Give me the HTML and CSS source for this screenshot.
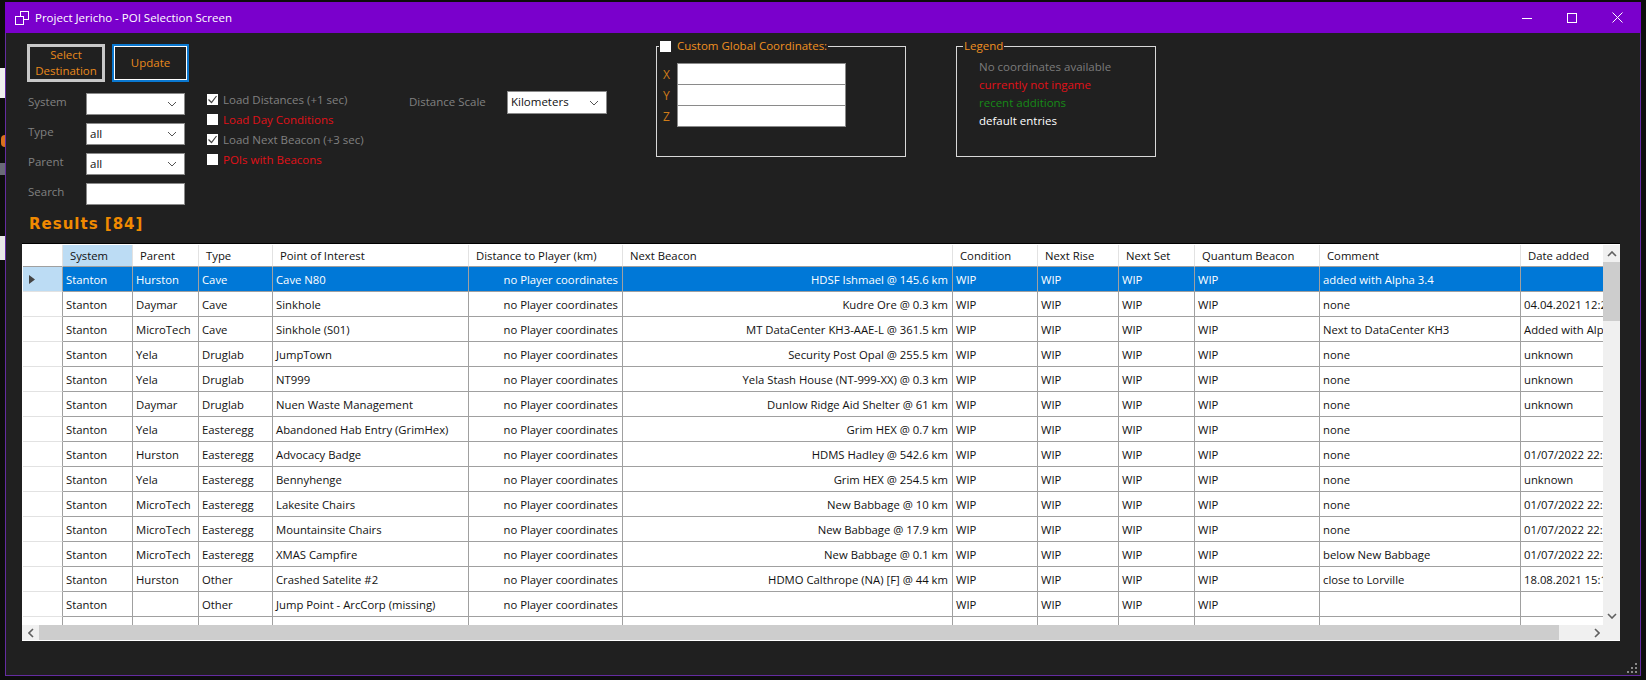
FILE: index.html
```html
<!DOCTYPE html>
<html lang="en">
<head>
  <meta charset="UTF-8" />
  <title>Project Jericho - POI Selection Screen</title>
  <link rel="stylesheet" href="styles.css">
</head>
<body>
<!-- bits of the desktop behind the window -->
<div class="behind behind-white"></div>
<div class="behind behind-orange"></div>
<div class="behind behind-grey"></div>
<div class="behind behind-white2"></div>

<div class="window">
  <header class="titlebar">
    <svg class="app-icon" width="14" height="14" viewBox="0 0 14 14" fill="none" stroke="#fff" stroke-width="1">
      <rect x="5.5" y="0.5" width="8" height="8"/>
      <rect x="0.5" y="5.5" width="8" height="8" fill="#7a00cc"/>
      <path d="M8.5 8.5V5.5H5.5"/>
    </svg>
    <span class="title">Project Jericho - POI Selection Screen</span>
    <div class="caption-buttons">
      <svg width="10" height="10" viewBox="0 0 10 10" stroke="#fff" fill="none"><path d="M0 5.5H10"/></svg>
      <svg width="10" height="10" viewBox="0 0 10 10" stroke="#fff" fill="none"><rect x="0.5" y="0.5" width="9" height="9"/></svg>
      <svg width="11" height="11" viewBox="0 0 11 11" stroke="#fff" fill="none"><path d="M0.5 0.5L10.5 10.5M10.5 0.5L0.5 10.5"/></svg>
    </div>
  </header>

  <section class="controls">
    <div class="col-main">
      <div class="buttons">
        <button class="btn btn-select">Select<br>Destination</button>
        <button class="btn btn-update">Update</button>
      </div>
      <div class="filters">
        <label>System</label>
        <div class="combo"><span></span><svg class="chev" width="10" height="6" viewBox="0 0 10 6"><path d="M1 1l4 4 4-4"/></svg></div>
        <label>Type</label>
        <div class="combo"><span>all</span><svg class="chev" width="10" height="6" viewBox="0 0 10 6"><path d="M1 1l4 4 4-4"/></svg></div>
        <label>Parent</label>
        <div class="combo"><span>all</span><svg class="chev" width="10" height="6" viewBox="0 0 10 6"><path d="M1 1l4 4 4-4"/></svg></div>
        <label>Search</label>
        <div class="combo"></div>
      </div>
    </div>

    <div class="col-options">
      <div class="opt"><span class="box"><svg width="11" height="11" viewBox="0 0 11 11"><path d="M1.5 5.5l3 3 5-6.5"/></svg></span>Load Distances (+1 sec)</div>
      <div class="opt red"><span class="box"></span>Load Day Conditions</div>
      <div class="opt"><span class="box"><svg width="11" height="11" viewBox="0 0 11 11"><path d="M1.5 5.5l3 3 5-6.5"/></svg></span>Load Next Beacon (+3 sec)</div>
      <div class="opt red"><span class="box"></span>POIs with Beacons</div>
    </div>

    <div class="col-scale">
      <label>Distance Scale</label>
      <div class="combo"><span>Kilometers</span><svg class="chev" width="10" height="6" viewBox="0 0 10 6"><path d="M1 1l4 4 4-4"/></svg></div>
    </div>

    <fieldset class="group group-coords">
      <legend><span class="box"></span>Custom Global Coordinates:</legend>
      <div class="coords">
        <span>X</span><div class="coord-input"></div>
        <span>Y</span><div class="coord-input"></div>
        <span>Z</span><div class="coord-input"></div>
      </div>
    </fieldset>

    <fieldset class="group group-legend">
      <legend>Legend</legend>
      <ul class="legend-list">
        <li class="grey">No coordinates available</li>
        <li class="red">currently not ingame</li>
        <li class="green">recent additions</li>
        <li class="white">default entries</li>
      </ul>
    </fieldset>
  </section>

  <h2 class="results">Results [84]</h2>

  <section class="grid">
    <div class="grid-main">
      <div class="grid-view">
        <table>
          <colgroup>
            <col style="width:40px"><col style="width:70px"><col style="width:66px"><col style="width:74px"><col style="width:196px"><col style="width:154px"><col style="width:330px"><col style="width:85px"><col style="width:81px"><col style="width:76px"><col style="width:125px"><col style="width:201px"><col style="width:140px">
          </colgroup>
          <thead>
            <tr><th class="rowhead"></th><th class="sorted">System</th><th>Parent</th><th>Type</th><th>Point of Interest</th><th>Distance to Player (km)</th><th>Next Beacon</th><th>Condition</th><th>Next Rise</th><th>Next Set</th><th>Quantum Beacon</th><th>Comment</th><th>Date added</th></tr>
          </thead>
          <tbody>
            <tr class="selected"><td class="rowhead"><svg width="6" height="9" viewBox="0 0 6 9"><path d="M0 0l6 4.5L0 9z" fill="#444"/></svg></td><td>Stanton</td><td>Hurston</td><td>Cave</td><td>Cave N80</td><td class="num">no Player coordinates</td><td class="num">HDSF Ishmael @ 145.6 km</td><td>WIP</td><td>WIP</td><td>WIP</td><td>WIP</td><td>added with Alpha 3.4</td><td></td></tr>
            <tr><td class="rowhead"></td><td>Stanton</td><td>Daymar</td><td>Cave</td><td>Sinkhole</td><td class="num">no Player coordinates</td><td class="num">Kudre Ore @ 0.3 km</td><td>WIP</td><td>WIP</td><td>WIP</td><td>WIP</td><td>none</td><td>04.04.2021 12:24</td></tr>
            <tr><td class="rowhead"></td><td>Stanton</td><td>MicroTech</td><td>Cave</td><td>Sinkhole (S01)</td><td class="num">no Player coordinates</td><td class="num">MT DataCenter KH3-AAE-L @ 361.5 km</td><td>WIP</td><td>WIP</td><td>WIP</td><td>WIP</td><td>Next to DataCenter KH3</td><td>Added with Alpha 3.4</td></tr>
            <tr><td class="rowhead"></td><td>Stanton</td><td>Yela</td><td>Druglab</td><td>JumpTown</td><td class="num">no Player coordinates</td><td class="num">Security Post Opal @ 255.5 km</td><td>WIP</td><td>WIP</td><td>WIP</td><td>WIP</td><td>none</td><td>unknown</td></tr>
            <tr><td class="rowhead"></td><td>Stanton</td><td>Yela</td><td>Druglab</td><td>NT999</td><td class="num">no Player coordinates</td><td class="num">Yela Stash House (NT-999-XX) @ 0.3 km</td><td>WIP</td><td>WIP</td><td>WIP</td><td>WIP</td><td>none</td><td>unknown</td></tr>
            <tr><td class="rowhead"></td><td>Stanton</td><td>Daymar</td><td>Druglab</td><td>Nuen Waste Management</td><td class="num">no Player coordinates</td><td class="num">Dunlow Ridge Aid Shelter @ 61 km</td><td>WIP</td><td>WIP</td><td>WIP</td><td>WIP</td><td>none</td><td>unknown</td></tr>
            <tr><td class="rowhead"></td><td>Stanton</td><td>Yela</td><td>Easteregg</td><td>Abandoned Hab Entry (GrimHex)</td><td class="num">no Player coordinates</td><td class="num">Grim HEX @ 0.7 km</td><td>WIP</td><td>WIP</td><td>WIP</td><td>WIP</td><td>none</td><td></td></tr>
            <tr><td class="rowhead"></td><td>Stanton</td><td>Hurston</td><td>Easteregg</td><td>Advocacy Badge</td><td class="num">no Player coordinates</td><td class="num">HDMS Hadley @ 542.6 km</td><td>WIP</td><td>WIP</td><td>WIP</td><td>WIP</td><td>none</td><td>01/07/2022 22:15</td></tr>
            <tr><td class="rowhead"></td><td>Stanton</td><td>Yela</td><td>Easteregg</td><td>Bennyhenge</td><td class="num">no Player coordinates</td><td class="num">Grim HEX @ 254.5 km</td><td>WIP</td><td>WIP</td><td>WIP</td><td>WIP</td><td>none</td><td>unknown</td></tr>
            <tr><td class="rowhead"></td><td>Stanton</td><td>MicroTech</td><td>Easteregg</td><td>Lakesite Chairs</td><td class="num">no Player coordinates</td><td class="num">New Babbage @ 10 km</td><td>WIP</td><td>WIP</td><td>WIP</td><td>WIP</td><td>none</td><td>01/07/2022 22:15</td></tr>
            <tr><td class="rowhead"></td><td>Stanton</td><td>MicroTech</td><td>Easteregg</td><td>Mountainsite Chairs</td><td class="num">no Player coordinates</td><td class="num">New Babbage @ 17.9 km</td><td>WIP</td><td>WIP</td><td>WIP</td><td>WIP</td><td>none</td><td>01/07/2022 22:15</td></tr>
            <tr><td class="rowhead"></td><td>Stanton</td><td>MicroTech</td><td>Easteregg</td><td>XMAS Campfire</td><td class="num">no Player coordinates</td><td class="num">New Babbage @ 0.1 km</td><td>WIP</td><td>WIP</td><td>WIP</td><td>WIP</td><td>below New Babbage</td><td>01/07/2022 22:15</td></tr>
            <tr><td class="rowhead"></td><td>Stanton</td><td>Hurston</td><td>Other</td><td>Crashed Satelite #2</td><td class="num">no Player coordinates</td><td class="num">HDMO Calthrope (NA) [F] @ 44 km</td><td>WIP</td><td>WIP</td><td>WIP</td><td>WIP</td><td>close to Lorville</td><td>18.08.2021 15:17</td></tr>
            <tr><td class="rowhead"></td><td>Stanton</td><td></td><td>Other</td><td>Jump Point - ArcCorp (missing)</td><td class="num">no Player coordinates</td><td class="num"></td><td>WIP</td><td>WIP</td><td>WIP</td><td>WIP</td><td></td><td></td></tr>
            <tr><td class="rowhead"></td><td></td><td></td><td></td><td></td><td></td><td></td><td></td><td></td><td></td><td></td><td></td><td></td></tr>
          </tbody>
        </table>
      </div>
      <div class="vscroll">
        <svg width="10" height="6" viewBox="0 0 10 6"><path d="M1 5l4-4 4 4"/></svg>
        <div class="vthumb"></div>
        <svg class="down" width="10" height="6" viewBox="0 0 10 6"><path d="M1 1l4 4 4-4"/></svg>
      </div>
    </div>
    <div class="hscroll">
      <svg width="6" height="10" viewBox="0 0 6 10"><path d="M5 1L1 5l4 4"/></svg>
      <div class="hthumb"></div>
      <svg width="6" height="10" viewBox="0 0 6 10"><path d="M1 1l4 4-4 4"/></svg>
    </div>
  </section>

  <svg class="grip" width="10" height="10" viewBox="0 0 10 10" fill="#8a8a8a"><rect x="8" y="0" width="2" height="2"/><rect x="4" y="4" width="2" height="2"/><rect x="8" y="4" width="2" height="2"/><rect x="0" y="8" width="2" height="2"/><rect x="4" y="8" width="2" height="2"/><rect x="8" y="8" width="2" height="2"/></svg>
</div>
</body>
</html>
```

FILE: styles.css
```css
html, body { margin: 0; height: 100%; overflow: hidden; }
body { background: #0d0d0d; font-family: "Open Sans", "Noto Sans", sans-serif; font-size: 11.5px; padding: 2px 5px 4px; box-sizing: border-box; }

.behind { position: absolute; left: 0; width: 5px; }
.behind-white { top: 68px; height: 30px; background: #f0f0f0; }
.behind-orange { top: 135px; height: 12px; width: 4px; left: 1px; background: #d9701e; border-radius: 6px 0 0 6px; }
.behind-grey { top: 163px; height: 12px; background: #6a6a78; }
.behind-white2 { top: 236px; height: 24px; background: #e8e8e8; }

.window { position: relative; height: 100%; background: #202020; border: 1px solid #642ca0; border-top: 0; box-sizing: border-box; }

.titlebar { display: flex; align-items: center; height: 31px; background: #7a00cc; color: #fff; padding-left: 10px; margin: 0 -1px; }
.app-icon { margin-right: 6px; }
.title { font-size: 11.5px; }
.caption-buttons { margin-left: auto; display: flex; align-items: center; gap: 35px; padding-right: 18px; }

.controls { display: flex; align-items: flex-start; padding: 11px 0 0 21px; height: 166px; box-sizing: border-box; }
.col-main { width: 162px; }
.buttons { display: flex; gap: 7px; }
.btn { background: #202020; color: #e8891c; font: inherit; line-height: 16px; padding: 0; box-sizing: border-box; }
.btn-select { width: 78px; height: 38px; border: 3px solid #c8c8c8; outline: 1px solid #202020; outline-offset: -4px; }
.btn-update { width: 77px; height: 38px; border: 2px solid #0a78d0; box-shadow: inset 0 0 0 1px #fff; }

.filters { display: grid; grid-template-columns: 59px 99px; grid-auto-rows: 22px; row-gap: 8px; margin-top: 11px; }
.filters label, .col-scale label { color: #808080; align-self: center; padding-left: 1px; padding-bottom: 5px; }
.combo { display: flex; align-items: center; justify-content: space-between; background: #fff; border: 1px solid #8a8a8a; box-sizing: border-box; padding: 0 7px 2px 3px; height: 22px; color: #111; }
.chev { fill: none; stroke: #555; stroke-width: 1; margin-top: 2px; }

.col-options { margin: 45px 0 0 18px; width: 201px; }
.opt { display: flex; align-items: center; height: 20px; color: #808080; }
.red { color: #e01018; }
.box { display: inline-block; width: 11px; height: 11px; background: #fff; margin-right: 5px; flex: none; }
.box svg { display: block; fill: none; stroke: #444; stroke-width: 1.2; }

.col-scale { display: flex; align-items: center; margin-top: 47px; width: 248px; }
.col-scale label { width: 98px; padding-bottom: 2px; }
.col-scale .combo { width: 100px; height: 23px; }

.group { border: 1px solid #d8d8d8; margin: -5px 0 0; padding: 0; box-sizing: border-box; height: 118px; position: relative; }
.group legend { color: #f09020; line-height: 14px; display: flex; align-items: center; }
.group-coords { width: 250px; margin-right: 50px; }
.group-coords legend { margin-left: 2px; padding: 0 1px; }
.group-coords .box { margin-right: 6px; }
.group-legend { width: 200px; }
.group-legend legend { margin-left: 6px; padding: 0 1px; }

.coords { display: grid; grid-template-columns: 20px 169px; grid-auto-rows: 21px; margin-top: 10px; color: #d07c18; font-size: 12px; align-items: center; }
.coords span { padding: 2px 0 0 6px; }
.coord-input { background: #fff; border: 1px solid #8a8a8a; height: 22px; box-sizing: border-box; }

.legend-list { list-style: none; margin: 5px 0 0 22px; padding: 0; }
.legend-list li { height: 18px; line-height: 18px; }
.grey { color: #7c7c7c; }
.green { color: #178a17; }
.white { color: #fff; }

.results { margin: 0 0 0 23px; height: 44px; font: bold 15px "DejaVu Sans", sans-serif; letter-spacing: 1px; color: #f08a00; line-height: 20px; padding-top: 15px; box-sizing: border-box; }

.grid { margin: 0 20px 0 16px; background: #fff; border-top: 1px solid #000; padding-top: 1px; height: 398px; box-sizing: border-box; display: flex; flex-direction: column; font-size: 11.3px; }
.grid-main { flex: 1; display: flex; min-height: 0; }
.grid-view { flex: 1; overflow: hidden; min-width: 0; padding-left: 1px; }
table { table-layout: fixed; border-collapse: separate; border-spacing: 0; width: 1638px; color: #111; }
th { height: 22px; box-sizing: border-box; font-weight: normal; text-align: left; padding: 0 0 0 7px; border-right: 1px solid #e2e2e2; border-bottom: 1px solid #a0a0a0; white-space: nowrap; overflow: hidden; background: #fff; }
th.sorted { background: #bcdcf4; }
td { height: 25px; box-sizing: border-box; padding: 0 3px; border-right: 1px solid #a0a0a0; border-bottom: 1px solid #a0a0a0; white-space: nowrap; overflow: hidden; }
td.num { text-align: right; padding-right: 4px; }
td.rowhead { border-right-color: #a0a0a0; border-bottom-color: #e2e2e2; padding-left: 6px; }
td.rowhead svg { display: block; }
.selected td { background: #0078d7; color: #fff; }
.selected td.rowhead { background: #bcdcf4; }

.vscroll { width: 17px; flex: none; background: #f0f0f0; display: flex; flex-direction: column; align-items: center; padding-top: 6px; box-sizing: border-box; }
.vscroll svg, .hscroll svg { fill: none; stroke: #606060; stroke-width: 1.6; flex: none; }
.vthumb { align-self: stretch; height: 59px; background: #cdcdcd; margin-top: 5px; }
.down { margin-top: auto; margin-bottom: 6px; }

.hscroll { height: 16px; flex: none; background: #f0f0f0; display: flex; align-items: center; padding: 0 20px 0 6px; border-bottom: 1px solid #fff; box-sizing: border-box; }
.hthumb { width: 1520px; height: 100%; background: #cdcdcd; margin: 0 auto 0 5px; }

.grip { position: absolute; right: 3px; bottom: 2px; }
```
